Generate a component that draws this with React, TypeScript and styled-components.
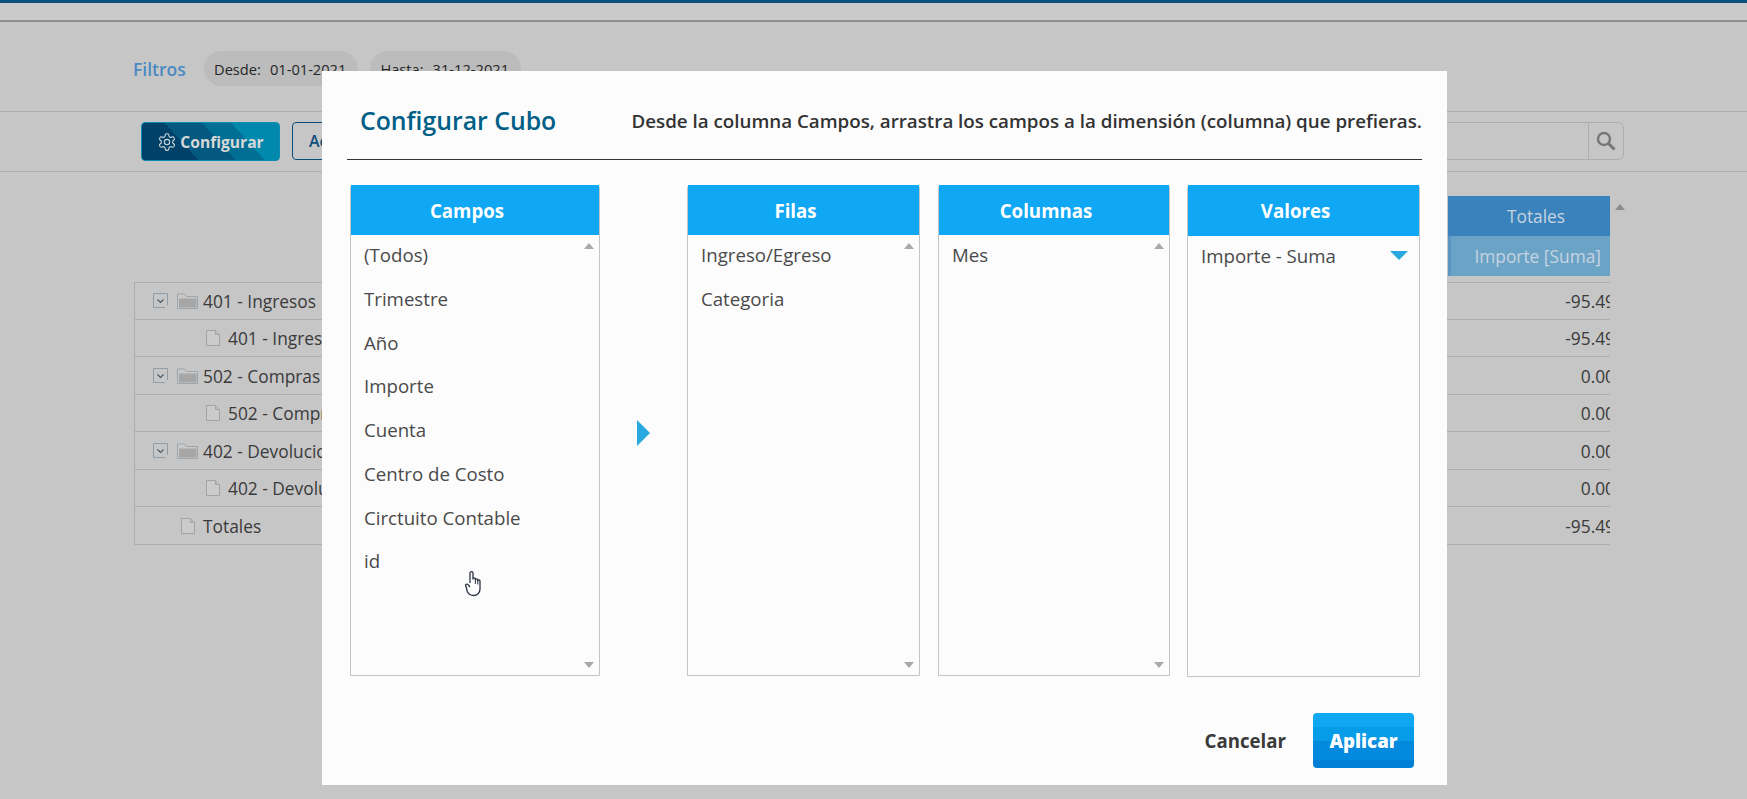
import React from "react";
import styled, { createGlobalStyle } from "styled-components";

const Global = createGlobalStyle`
  html, body { margin: 0; padding: 0; height: 100%; background: #c6c6c6; overflow: hidden; }
  body { font-family: "Open Sans", "Liberation Sans", sans-serif; color: #3a3a3a; }
  * { box-sizing: border-box; }
`;

const Page = styled.div`
  width: 1747px;
  height: 799px;
  position: relative;
  overflow: hidden;
  background: #c6c6c6;
`;
const TopBar = styled.div`
  height: 22px;
  border-top: 3px solid #0d4f7c;
  border-bottom: 2px solid #8e8e8e;
  background: #cacaca;
`;
const FilterRow = styled.div`
  height: 90px;
  padding: 29px 0 0 133px;
  display: flex;
  align-items: flex-start;
  gap: 12px;
  border-bottom: 1px solid #aeaeae;
`;
const FilterTitle = styled.span`
  font-size: 17.5px;
  font-weight: 600;
  color: #4b8ac4;
  line-height: 37px;
  width: 59px;
`;
const Pill = styled.div`
  height: 35px;
  border-radius: 18px;
  background: #bcbcbc;
  padding: 0 12px 0 10px;
  display: flex;
  gap: 9px;
  align-items: center;
  font-size: 14.67px;
  color: #262626;
  white-space: nowrap;
`;
const Toolbar = styled.div`
  height: 60px;
  padding: 10px 123px 0 141px;
  display: flex;
  align-items: flex-start;
  justify-content: space-between;
  border-bottom: 1px solid #aeaeae;
`;
const ToolGroup = styled.div`
  display: flex;
  gap: 12px;
`;
const ConfigButton = styled.div`
  width: 139px;
  height: 39px;
  border-radius: 4px;
  border: 1px solid #0f8db0;
  background: linear-gradient(48deg, #00416a 0 33%, #03597f 33% 55%, #006f93 55% 72%, #0089ad 72%);
  color: #d8d8d8;
  font-weight: 700;
  font-size: 15.6px;
  display: flex;
  align-items: center;
  justify-content: center;
  gap: 3px;
`;
const OutlineButton = styled.div`
  width: 100px;
  height: 38px;
  border-radius: 4px;
  border: 1px solid #0d4f7c;
  color: #0d4f7c;
  font-size: 16px;
  font-weight: 600;
  padding-left: 16px;
  line-height: 36px;
`;
const SearchBox = styled.div`
  width: 300px;
  height: 38px;
  border: 1px solid #aeaeae;
  border-radius: 6px;
  display: flex;
  justify-content: flex-end;
`;
const SearchIcon = styled.div`
  width: 35px;
  border-left: 1px solid #aeaeae;
  display: flex;
  align-items: center;
  justify-content: center;
`;
const TableArea = styled.div`
  position: relative;
  padding: 24px 0 0 134px;
  width: 1610px;
`;
const HeaderBlock = styled.div`
  margin-left: auto;
  width: 162px;
  font-size: 17.33px;
  text-align: center;
  color: #c6d4e0;
`;
const HeaderTop = styled.div`
  height: 40px;
  line-height: 40px;
  padding-left: 14px;
  background: #3a82bb;
`;
const HeaderBottom = styled.div`
  height: 40px;
  line-height: 40px;
  background: #6ba3c6;
  border-left: 3px solid #5b96c2;
  text-align: right;
  padding-right: 9px;
  white-space: nowrap;
`;
const UpMark = styled.div`
  position: absolute;
  left: 1615px;
  top: 32px;
  width: 0;
  height: 0;
  border: 5px solid transparent;
  border-top: 0;
  border-bottom: 6px solid #8b8b8b;
`;
const Table = styled.div`
  margin-top: 6px;
  border-top: 1px solid #aeaeae;
  border-left: 1px solid #aeaeae;
`;
const Row = styled.div<{ $h: number }>`
  height: ${(p) => p.$h}px;
  display: flex;
  align-items: center;
  border-bottom: 1px solid #aeaeae;
  font-size: 17.33px;
  color: #3a3a3a;
`;
const Label = styled.div<{ $indent: number }>`
  padding-left: ${(p) => p.$indent}px;
  display: flex;
  align-items: center;
  white-space: nowrap;
`;
const Value = styled.div`
  margin-left: auto;
  display: flex;
  justify-content: flex-end;
  overflow: hidden;
  width: 100px;
`;
const ValueText = styled.span<{ $cut: number }>`
  margin-right: -${(p) => p.$cut}px;
`;

const Backdrop = styled.div`
  position: absolute;
  inset: 0;
`;
const Modal = styled.div`
  position: absolute;
  left: 322px;
  top: 71px;
  width: 1125px;
  height: 714px;
  background: #fcfcfc;
  padding: 0 25px;
`;
const ModalHead = styled.div`
  height: 89px;
  border-bottom: 1px solid #333;
  display: flex;
  align-items: center;
  justify-content: space-between;
  padding: 9px 0 0 13px;
`;
const ModalTitle = styled.h2`
  margin: 0;
  font-size: 24.8px;
  font-weight: 600;
  color: #005f87;
`;
const ModalHint = styled.p`
  margin: 1px 0 0;
  font-size: 18.75px;
  font-weight: 600;
  color: #333;
  white-space: nowrap;
`;
const Columns = styled.div`
  display: flex;
  margin: 25px 0 0 3px;
  align-items: flex-start;
`;
const ArrowSlot = styled.div`
  width: 87px;
  height: 490px;
  padding-left: 37px;
  display: flex;
  align-items: center;
`;
const Arrow = styled.div`
  width: 0;
  height: 0;
  border-left: 13px solid #29a9e0;
  border-top: 13px solid transparent;
  border-bottom: 13px solid transparent;
  margin-top: 6px;
`;
const Panel = styled.div<{ $w: number; $h: number; $ml?: number }>`
  position: relative;
  width: ${(p) => p.$w}px;
  height: ${(p) => p.$h}px;
  margin-left: ${(p) => p.$ml ?? 0}px;
  border: 1px solid #c4c4c4;
  border-radius: 3px 3px 0 0;
`;
const PanelHead = styled.div<{ $tall?: boolean }>`
  height: ${(p) => (p.$tall ? 51 : 50)}px;
  margin-top: -1px;
  padding: 2px 16px 0 0;
  background: #10a8f4;
  color: #fff;
  font-size: 18.67px;
  font-weight: 700;
  text-align: center;
  line-height: 47px;
`;
const Item = styled.div`
  height: 43.75px;
  line-height: 39px;
  padding-left: 13px;
  font-size: 18.67px;
  color: #4a4a4a;
`;
const ScrollMark = styled.div<{ $down?: boolean }>`
  position: absolute;
  right: 5px;
  width: 0;
  height: 0;
  border-left: 5px solid transparent;
  border-right: 5px solid transparent;
  ${(p) =>
    p.$down
      ? "bottom: 7px; border-top: 6px solid #a9a9a9;"
      : "top: 57px; border-bottom: 6px solid #a9a9a9;"}
`;
const DropMark = styled.div`
  position: absolute;
  right: 11px;
  top: 65px;
  width: 0;
  height: 0;
  border-left: 9px solid transparent;
  border-right: 9px solid transparent;
  border-top: 9px solid #29a9e0;
`;
const Footer = styled.div`
  display: flex;
  justify-content: flex-end;
  align-items: center;
  gap: 27px;
  margin: 36px 8px 0 0;
`;
const CancelText = styled.span`
  font-size: 18.67px;
  font-weight: 700;
  color: #3a3a3a;
`;
const ApplyButton = styled.div`
  width: 101px;
  height: 55px;
  border-radius: 4px;
  background: linear-gradient(#10a8f4 0 25%, #079ce8 25% 50%, #0389dd 50% 85%, #007fd6 85%);
  color: #fff;
  font-size: 18.67px;
  font-weight: 800;
  text-align: center;
  line-height: 55px;
`;
const Cursor = styled.svg`
  position: absolute;
  left: 465px;
  top: 571px;
`;
const IconSlot = styled.svg<{ $gap: number }>`
  margin-right: ${(p) => p.$gap}px;
  flex: none;
`;

const GearIcon = () => (
  <svg width="20" height="20" viewBox="0 0 24 24" fill="none" stroke="#d8d8d8" strokeWidth="1.3">
    <path d="M12.2 2h-.4a2 2 0 0 0-2 2v.2a2 2 0 0 1-1 1.7l-.4.3a2 2 0 0 1-2 0l-.2-.1a2 2 0 0 0-2.7.7l-.2.4a2 2 0 0 0 .7 2.7l.2.1a2 2 0 0 1 1 1.7v.5a2 2 0 0 1-1 1.8l-.2.1a2 2 0 0 0-.7 2.7l.2.4a2 2 0 0 0 2.7.7l.2-.1a2 2 0 0 1 2 0l.4.3a2 2 0 0 1 1 1.7v.2a2 2 0 0 0 2 2h.4a2 2 0 0 0 2-2v-.2a2 2 0 0 1 1-1.7l.4-.3a2 2 0 0 1 2 0l.2.1a2 2 0 0 0 2.7-.7l.2-.4a2 2 0 0 0-.7-2.7l-.2-.1a2 2 0 0 1-1-1.8v-.5a2 2 0 0 1 1-1.7l.2-.1a2 2 0 0 0 .7-2.7l-.2-.4a2 2 0 0 0-2.7-.7l-.2.1a2 2 0 0 1-2 0l-.4-.3a2 2 0 0 1-1-1.7V4a2 2 0 0 0-2-2z" />
    <circle cx="12" cy="12" r="3.2" />
  </svg>
);
const MagnifierIcon = () => (
  <svg width="22" height="22" viewBox="0 0 22 22" fill="none" stroke="#767676">
    <circle cx="9" cy="9" r="6" strokeWidth="2.4" />
    <path d="M13.5 13.5L19.5 19.5" strokeWidth="3" />
  </svg>
);
const ExpandIcon = () => (
  <IconSlot $gap={9} width="15" height="16" viewBox="0 0 15 16" fill="none">
    <path d="M14.5 12V.5H.5v14H12" stroke="#909ca6" />
    <path d="M4.5 6.5l3 3 3-3" stroke="#4a5560" strokeWidth="1.1" />
  </IconSlot>
);
const FolderIcon = () => (
  <IconSlot $gap={5} width="21" height="16" viewBox="0 0 21 16">
    <path d="M.5 15.5V1h7l2 2.5h11v12z" fill="#c9c9c9" stroke="#9aa5ad" />
    <path d="M2 5.5h17.5v9H2z" fill="#a6a6a6" />
  </IconSlot>
);
const DocIcon = () => (
  <IconSlot $gap={8} width="14" height="16" viewBox="0 0 14 16" fill="#cbcbcb" stroke="#a3a3a3">
    <path d="M.5 .5h9l4 4v11H.5z" />
    <path d="M9.5 .5v4h4" fill="#bcbcbc" />
  </IconSlot>
);

const rows = [
  { h: 37, ind: 18, folder: true, text: "401 - Ingresos", val: "-95.49" },
  { h: 37, ind: 71, folder: false, text: "401 - Ingresos", val: "-95.49" },
  { h: 38, ind: 18, folder: true, text: "502 - Compras", val: "0.00" },
  { h: 37, ind: 71, folder: false, text: "502 - Compras", val: "0.00" },
  { h: 38, ind: 18, folder: true, text: "402 - Devoluciones", val: "0.00" },
  { h: 37, ind: 71, folder: false, text: "402 - Devoluciones", val: "0.00" },
  { h: 38, ind: 46, folder: false, text: "Totales", val: "-95.49" },
];

const campos = ["(Todos)", "Trimestre", "Año", "Importe", "Cuenta", "Centro de Costo", "Circtuito Contable", "id"];

export default function App() {
  return (
    <Page>
      <Global />
      <TopBar />
      <FilterRow>
        <FilterTitle>Filtros</FilterTitle>
        <Pill>
          <span>Desde:</span>
          <span>01-01-2021</span>
        </Pill>
        <Pill>
          <span>Hasta:</span>
          <span>31-12-2021</span>
        </Pill>
      </FilterRow>
      <Toolbar>
        <ToolGroup>
          <ConfigButton>
            <GearIcon />
            Configurar
          </ConfigButton>
          <OutlineButton>Acciones</OutlineButton>
        </ToolGroup>
        <SearchBox>
          <SearchIcon>
            <MagnifierIcon />
          </SearchIcon>
        </SearchBox>
      </Toolbar>
      <TableArea>
        <UpMark />
        <HeaderBlock>
          <HeaderTop>Totales</HeaderTop>
          <HeaderBottom>Importe [Suma]</HeaderBottom>
        </HeaderBlock>
        <Table>
          {rows.map((r, i) => (
            <Row key={i} $h={r.h}>
              <Label $indent={r.ind}>
                {r.folder && <ExpandIcon />}
                {r.folder ? <FolderIcon /> : <DocIcon />}
                {r.text}
              </Label>
              <Value>
                <ValueText $cut={5}>{r.val}</ValueText>
              </Value>
            </Row>
          ))}
        </Table>
      </TableArea>
      <Backdrop>
        <Modal>
          <ModalHead>
            <ModalTitle>Configurar Cubo</ModalTitle>
            <ModalHint>Desde la columna Campos, arrastra los campos a la dimensión (columna) que prefieras.</ModalHint>
          </ModalHead>
          <Columns>
            <Panel $w={250} $h={491}>
              <PanelHead>Campos</PanelHead>
              {campos.map((c) => (
                <Item key={c}>{c}</Item>
              ))}
              <ScrollMark />
              <ScrollMark $down />
            </Panel>
            <ArrowSlot>
              <Arrow />
            </ArrowSlot>
            <Panel $w={233} $h={491}>
              <PanelHead>Filas</PanelHead>
              <Item>Ingreso/Egreso</Item>
              <Item>Categoria</Item>
              <ScrollMark />
              <ScrollMark $down />
            </Panel>
            <Panel $w={232} $h={491} $ml={18}>
              <PanelHead>Columnas</PanelHead>
              <Item>Mes</Item>
              <ScrollMark />
              <ScrollMark $down />
            </Panel>
            <Panel $w={233} $h={492} $ml={17}>
              <PanelHead $tall>Valores</PanelHead>
              <Item>Importe - Suma</Item>
              <DropMark />
            </Panel>
          </Columns>
          <Footer>
            <CancelText>Cancelar</CancelText>
            <ApplyButton>Aplicar</ApplyButton>
          </Footer>
        </Modal>
        <Cursor width="19" height="26" viewBox="0 0 19 26" fill="#fff" stroke="#2a3342" strokeWidth="1.3" strokeLinejoin="round">
          <path d="M5 12V2.2a1.5 1.5 0 0 1 3 0V8a1.2 1.2 0 0 1 2.4 0v1a1.2 1.2 0 0 1 2.4 0v1a1.1 1.1 0 0 1 2.2 0v8c0 4-3 6.5-6.5 6.5-3.8 0-5.2-2-6.2-4L.9 15c-.8-1.4 1-2.6 2.2-1.4L5 16" />
          <path d="M10.4 8.5v4.5M12.8 9.5v4" fill="none" strokeWidth="1" />
        </Cursor>
      </Backdrop>
    </Page>
  );
}
